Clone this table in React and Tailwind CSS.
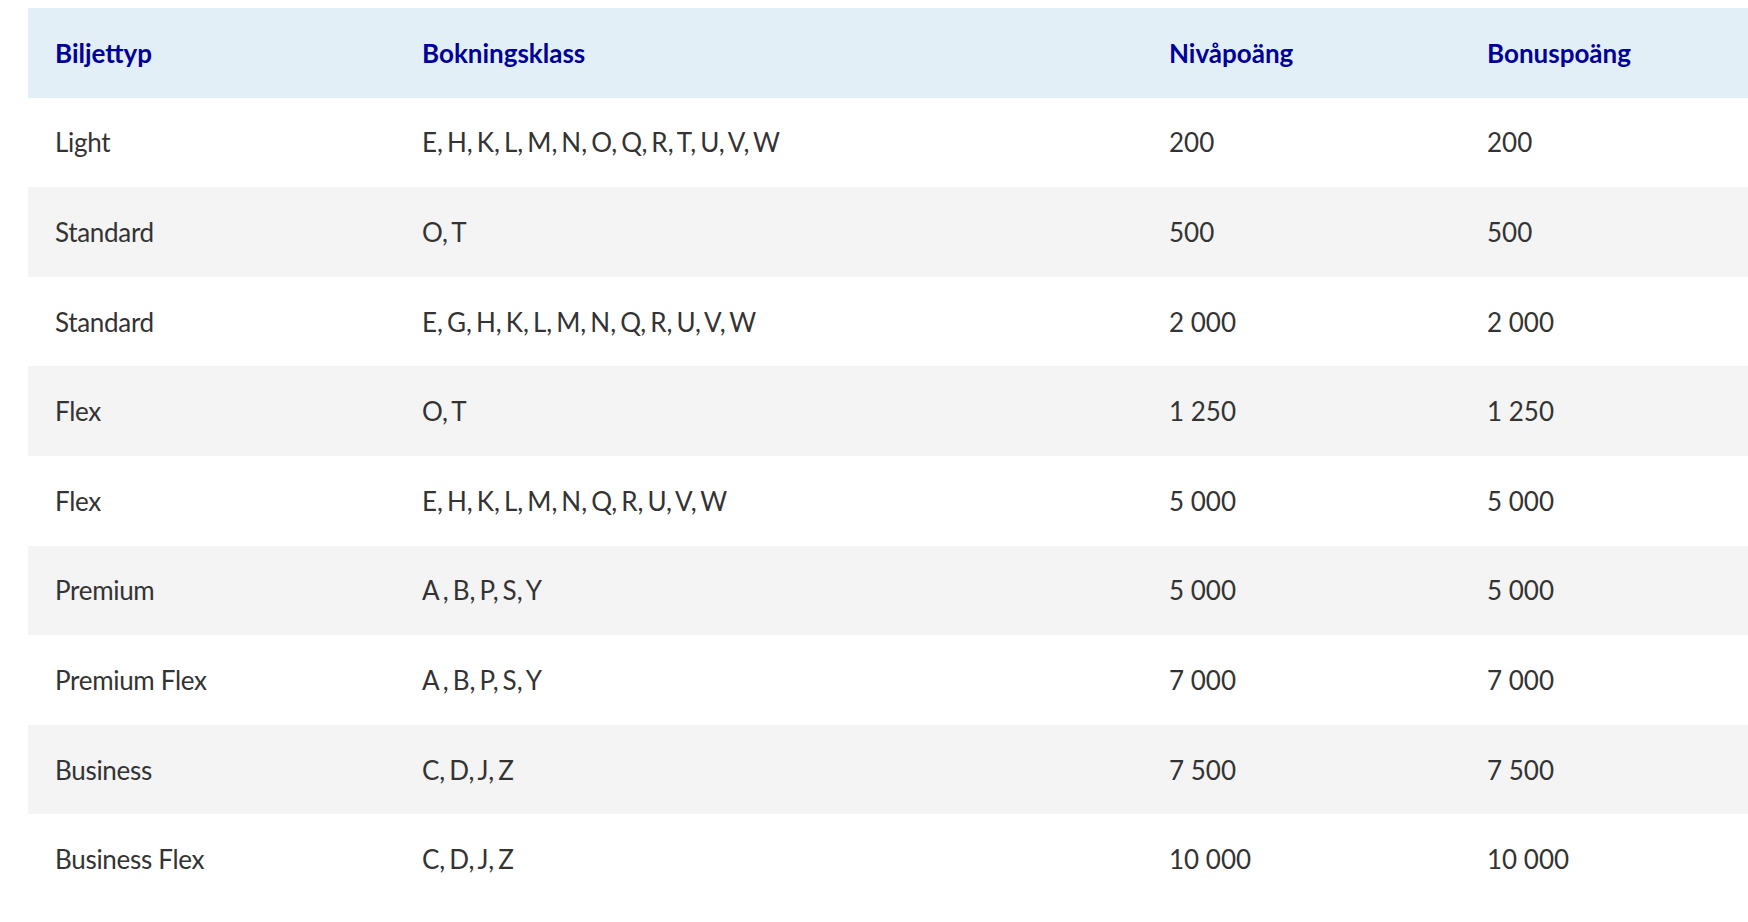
import React from "react";

const rows = [
  ["Light", "E, H, K, L, M, N, O, Q, R, T, U, V, W", "200", "200"],
  ["Standard", "O, T", "500", "500"],
  ["Standard", "E, G, H, K, L, M, N, Q, R, U, V, W", "2 000", "2 000"],
  ["Flex", "O, T", "1 250", "1 250"],
  ["Flex", "E, H, K, L, M, N, Q, R, U, V, W", "5 000", "5 000"],
  ["Premium", "A , B, P, S, Y", "5 000", "5 000"],
  ["Premium Flex", "A , B, P, S, Y", "7 000", "7 000"],
  ["Business", "C, D, J, Z", "7 500", "7 500"],
  ["Business Flex", "C, D, J, Z", "10 000", "10 000"],
];

export default function App() {
  return (
    <div
      className="w-[1748px] h-[922px] overflow-hidden bg-white pt-[8px] pl-[28px]"
      style={{ fontFamily: 'Lato, "DejaVu Sans Condensed", sans-serif' }}
    >
      <table className="table-fixed border-collapse w-[1720px] text-[26px] leading-none">
        <colgroup>
          <col className="w-[367px]" />
          <col className="w-[747px]" />
          <col className="w-[318px]" />
          <col className="w-[288px]" />
        </colgroup>
        <thead>
          <tr className="bg-[#e2eff6] h-[89.6px]">
            {["Biljettyp", "Bokningsklass", "Nivåpoäng", "Bonuspoäng"].map((h) => (
              <th key={h} className="text-left font-bold text-[#000099] pl-[27px] align-middle">
                {h}
              </th>
            ))}
          </tr>
        </thead>
        <tbody>
          {rows.map((r, i) => (
            <tr key={i} className={`h-[89.6px] ${i % 2 === 1 ? "bg-[#f4f4f4]" : "bg-white"}`}>
              <td className="pl-[27px] align-middle text-[#333333] tracking-[-0.3px]">{r[0]}</td>
              <td className="pl-[27px] align-middle text-[#333333] [word-spacing:-2.6px]">{r[1]}</td>
              <td className="pl-[27px] align-middle text-[#333333]">{r[2]}</td>
              <td className="pl-[27px] align-middle text-[#333333]">{r[3]}</td>
            </tr>
          ))}
        </tbody>
      </table>
    </div>
  );
}
